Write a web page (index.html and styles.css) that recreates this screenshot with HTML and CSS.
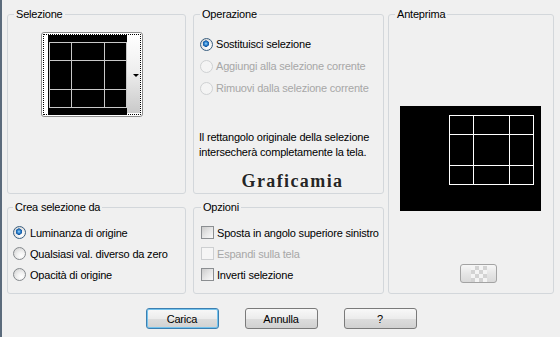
FILE: index.html
```html
<html>
	<head>
		<meta charset="utf-8">
		<link rel="stylesheet" href="styles.css">
	</head>
	<body>
		<div class="panels">
			<fieldset class="group sel">
				<legend>Selezione</legend>
				<div class="picker">
					<svg class="thumb" width="79" height="80" viewBox="0 0 79 80">
						<rect x="0" y="0" width="79" height="80" fill="#000"/>
						<rect x="1.5" y="7.5" width="77" height="65" fill="none" stroke="#c8c8c8"/>
						<path d="M23.5 7.5V72.5M56.5 7.5V72.5M1.5 25.5H78.5M1.5 54.5H78.5" stroke="#c8c8c8"/>
					</svg>
					<span class="drop"><span class="arrow"></span></span>
				</div>
			</fieldset>

			<fieldset class="group op">
				<legend>Operazione</legend>
				<label class="opt"><span class="radio checked"></span>Sostituisci selezione</label>
				<label class="opt off"><span class="radio"></span>Aggiungi alla selezione corrente</label>
				<label class="opt off"><span class="radio"></span>Rimuovi dalla selezione corrente</label>
				<p class="note">Il rettangolo originale della selezione<br>intersecherà completamente la tela.</p>
				<div class="mark">Graficamia</div>
			</fieldset>

			<fieldset class="group prev">
				<legend>Anteprima</legend>
				<svg class="preview" width="141" height="105" viewBox="0 0 141 105">
					<rect x="0" y="0" width="141" height="105" fill="#000"/>
					<rect x="49.5" y="9.5" width="84" height="69" fill="none" stroke="#fff"/>
					<path d="M73.5 9.5V78.5M109.5 9.5V78.5M49.5 28.5H133.5M49.5 59.5H133.5" stroke="#fff"/>
				</svg>
				<div class="zoombtn"><span class="checker"></span></div>
			</fieldset>

			<fieldset class="group crea">
				<legend>Crea selezione da</legend>
				<label class="opt"><span class="radio checked"></span>Luminanza di origine</label>
				<label class="opt"><span class="radio"></span>Qualsiasi val. diverso da zero</label>
				<label class="opt"><span class="radio"></span>Opacità di origine</label>
			</fieldset>

			<fieldset class="group opz">
				<legend>Opzioni</legend>
				<label class="opt"><span class="check"></span>Sposta in angolo superiore sinistro</label>
				<label class="opt off"><span class="check"></span>Espandi sulla tela</label>
				<label class="opt"><span class="check"></span>Inverti selezione</label>
			</fieldset>
		</div>

		<div class="buttons">
			<button class="btn default">Carica</button>
			<button class="btn">Annulla</button>
			<button class="btn">?</button>
		</div>
	</body>
</html>
```

FILE: styles.css
```css
html {
	height: 100%;
	margin: 0;
	padding: 0;
}
body {
	height: 100%;
	box-sizing: border-box;
	margin: 0;
	padding: 8px 0 0 5px;
	border-left: 2px solid #5b6b7c;
	background-color: #f0f0f0;
	font-family: "Liberation Sans", Arial, sans-serif;
	font-size: 11px;
	letter-spacing: -0.2px;
	color: #000;
	overflow: hidden;
}

/* ---------- group boxes ---------- */
.panels {
	display: grid;
	grid-template-columns: 179px 7px 191px 4px 166px;
	grid-template-rows: 186px 93px;
	row-gap: 7px;
}
.group {
	box-sizing: border-box;
	margin: 0;
	padding: 0 6px;
	min-width: 0;
	border: 1px solid #d3d7db;
	border-radius: 3px;
}
.group legend {
	padding: 0 2px;
	line-height: 13px;
	height: 13px;
}
.sel { grid-column: 1; grid-row: 1; }
.op { grid-column: 3; grid-row: 1; padding-top: 12px; }
.prev { grid-column: 5; grid-row: 1 / 3; }
.crea { grid-column: 1; grid-row: 2; padding-left: 5px; padding-top: 8px; }
.opz { grid-column: 3; grid-row: 2; padding-left: 7px; padding-top: 8px; }

/* ---------- options ---------- */
.opt {
	display: flex;
	align-items: center;
	height: 21px;
	white-space: nowrap;
}
.op .opt { height: 22px; }
.opt.off { color: #a7a7a7; }

.radio {
	box-sizing: border-box;
	width: 13px;
	height: 13px;
	margin-right: 3px;
	border: 1px solid #85898d;
	border-radius: 50%;
	background: radial-gradient(circle at 65% 70%, #ffffff 0, #f2f2f2 35%, #cdcdcd 100%);
	flex: none;
}
.crea .radio { margin-right: 4px; }
.radio.checked {
	border-color: #3a5f80;
	background:
		radial-gradient(circle at 45% 42%, #9fd6ff 0, #2f86d0 1.6px, #1556a0 3px, rgba(0,0,0,0) 3.4px),
		radial-gradient(circle at 65% 70%, #ffffff 0, #f2f2f2 35%, #cdcdcd 100%);
}
.opt.off .radio {
	border-color: #cfd1d3;
	background: #f4f4f4;
}

.check {
	box-sizing: border-box;
	width: 13px;
	height: 13px;
	margin-right: 3px;
	border: 1px solid #8b8e91;
	background: linear-gradient(135deg, #cbcbcb 0, #e6e6e6 50%, #fafafa 100%);
	flex: none;
}
.opt.off .check {
	border-color: #cdcfd1;
	background: #f5f5f5;
}

.note {
	margin: 31px 0 0 -1px;
	line-height: 15px;
}
.mark {
	margin-top: 11px;
	text-align: center;
	padding-left: 8px;
	font-family: "Liberation Serif", "Times New Roman", serif;
	font-size: 18px;
	font-weight: bold;
	letter-spacing: 1.4px;
	line-height: 20px;
	color: #262626;
	text-shadow: 0 0 2px #fff;
}

/* ---------- selection picker ---------- */
.picker {
	box-sizing: border-box;
	display: flex;
	width: 102px;
	height: 85px;
	margin: 11px 0 0 27px;
	padding: 2px 2px 2px 6px;
	border: 1px solid #8d8d8d;
	border-radius: 3px;
	background: #fff;
	outline: 1px dotted #000;
	outline-offset: -3px;
}
.thumb {
	display: block;
	flex: none;
}
.drop {
	flex: 1;
	display: flex;
	align-items: center;
	justify-content: flex-end;
	margin-bottom: 1px;
	padding-right: 1px;
	background: linear-gradient(#ffffff, #efefef 45%, #c9c9c9);
}
.arrow {
	width: 0;
	height: 0;
	margin-top: 2px;
	border-left: 3px solid transparent;
	border-right: 3px solid transparent;
	border-top: 3px solid #000;
}

/* ---------- preview ---------- */
.preview {
	display: block;
	margin: 85px 0 0 5px;
}
.zoombtn {
	box-sizing: border-box;
	display: flex;
	align-items: center;
	justify-content: center;
	width: 37px;
	height: 19px;
	margin: 53px 0 0 65px;
	border: 1px solid #a3a3a3;
	border-radius: 3px;
	background: linear-gradient(#f7f7f7, #e6e6e6 50%, #d9d9d9);
}
.checker {
	width: 16px;
	height: 16px;
	background: repeating-conic-gradient(#d3d3d3 0 25%, #f4f4f4 0 50%) 0 0 / 8px 8px;
}

/* ---------- buttons ---------- */
.buttons {
	display: flex;
	justify-content: center;
	gap: 26px;
	margin-top: 14px;
	padding-right: 5px;
}
.btn {
	box-sizing: border-box;
	width: 73px;
	height: 21px;
	padding: 0;
	border: 1px solid #7a7a7a;
	border-radius: 3px;
	background: linear-gradient(#f8f8f8, #ececec 50%, #dddddd 51%, #d1d1d1);
	font-family: "Liberation Sans", Arial, sans-serif;
	font-size: 11px;
	letter-spacing: -0.2px;
	color: #000;
}
.btn.default {
	border-color: #3c7fb1;
	box-shadow: inset 0 0 0 1px #74c3ed;
}
```
